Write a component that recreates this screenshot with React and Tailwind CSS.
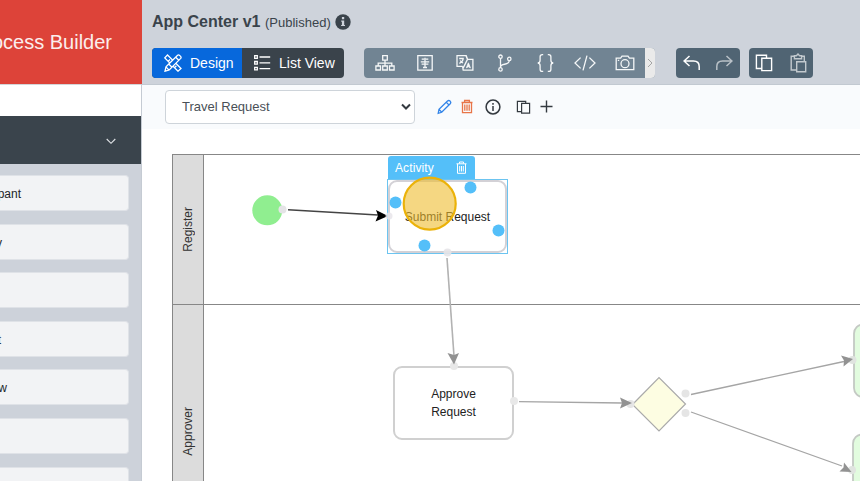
import React from 'react';

const Icon = ({ children, w = 20, h = 20, className = '', sw = 1.3 }) => (
  <svg width={w} height={h} viewBox={`0 0 ${w} ${h}`} className={`block shrink-0 ${className}`} fill="none" stroke="currentColor" strokeWidth={sw}>
    {children}
  </svg>
);

const DesignIcon = () => (
  <Icon w={18} h={18}>
    <path d="M3.5 1 L17 14.5 L14 17.2 L0.8 3.9 Z" />
    <path d="M4.2 7.3l1.8-1.8M7 10.1l1-1M10.6 13.6l1.8-1.8" />
    <path className="fill-[#0768dc]" d="M1 17.2l1-4.3L13.6 1.3q1-.8 2 .1l1 1q.9 1 .1 2L5.2 16z" />
    <path d="M11.7 3.2l3.1 3.1M2 13l3.1 3.1M5 10.2l3 3" />
  </Icon>
);

const ListIcon = () => (
  <Icon w={18} h={18}>
    <path d="M1.7 1.7h2.6v2.6H1.7zM1.7 7.5h2.6v2.6H1.7zM1.7 13.3h2.6v2.6H1.7zM6.5 3h10.7M6.5 8.8h10.7M6.5 14.6h10.7" />
  </Icon>
);

const SitemapIcon = () => (
  <Icon>
    <path d="M7.7 2.6h4.6v4.6H7.7zM.9 13h4.6v4H.9zM7.7 13h4.6v4H7.7zM14.5 13h4.6v4h-4.6zM10 7.2V13M3.2 13v-2.9h13.6V13" />
  </Icon>
);
const FormIcon = () => (
  <Icon>
    <path d="M2.8 2.7h14.4v14.4H2.8zM10 4.7v9.6M6.7 6.2h2.5M10.8 6.2h2.5M5.8 8.8h8.4M6.6 11.2h6.8M8 14.5h4" />
  </Icon>
);
const LanguageIcon = () => (
  <Icon>
    <path d="M7.6 13.4H2V2.6h9.2l1.3 3.3M12.3 6.3h5.6v10.9H8.2l-.6-3.8M10.9 2.6l1.6 3.8-5 10" />
    <path d="M4.2 5.5h4.6M8.2 5.5c-.2 2.300-1.700 3.900-3.900 4.800M5.200 7.500c.6 1.300 1.600 2.100 2.900 2.500" />
    <path fill="currentColor" strokeWidth=".8" d="M11.400 14.800l2-5 2 5-2-1z" />
  </Icon>
);
const BranchIcon = () => (
  <Icon>
    <circle cx="5.500" cy="3.700" r="1.700" />
    <circle cx="5.500" cy="16.400" r="1.700" />
    <circle cx="14.300" cy="5.900" r="1.700" />
    <path d="M5.500 5.400v9.300M14.300 7.600c0 5.300-8.500 2.100-8.800 6.400" />
  </Icon>
);
const BracesIcon = () => (
  <Icon>
    <path d="M8.200 1.600H7.300q-2.200 0-2.200 2.200v3.400q0 2.800-2.400 2.800 2.400 0 2.400 2.800v3.400q0 2.200 2.200 2.200h.9M12.800 1.600h.9q2.200 0 2.200 2.200v3.400q0 2.800 2.400 2.800-2.400 0-2.400 2.800v3.400q0 2.200-2.200 2.200h-.9" />
  </Icon>
);
const CodeIcon = () => (
  <Icon w={22}>
    <path d="M6.600 4.600L1 10l5.600 5.400M15.400 4.600L21 10l-5.600 5.400M13 2.600L9 17.400" />
  </Icon>
);
const CameraIcon = () => (
  <Icon>
    <path d="M1.200 5.200h4.400L7 3.200h6l1.400 2h4.400v11.500H1.200z" />
    <circle cx="10" cy="10.700" r="4" />
    <path d="M2.800 7.300h1.400" />
  </Icon>
);

const CopyIcon = ({ className }) => (
  <Icon w={18} h={18} sw={1.4} className={className}>
    <path d="M6.600 14.500H1.400V1.200h10.100v2.400M6.800 4.200h9.800v12.400H6.800z" />
  </Icon>
);

const tools = [SitemapIcon, FormIcon, LanguageIcon, BranchIcon, BracesIcon, CodeIcon, CameraIcon];

const shapes = [
  { label: 'pant', width: 'w-[21px]' },
  { label: 'y', width: 'w-[2px]' },
  { label: '', width: 'w-0' },
  { label: 't', width: 'w-px' },
  { label: 'w', width: 'w-[7px]' },
  { label: '', width: 'w-0' },
  { label: '', width: 'w-0' },
];

function Sidebar() {
  return (
    <aside className="flex h-full w-[142px] shrink-0 flex-col overflow-hidden bg-[#cdd2da]">
      <div className="flex h-[84px] shrink-0 items-center justify-end bg-[#dd4339] pr-[30px] text-[20px] whitespace-nowrap text-[#fbeeed]">
        ocess Builder
      </div>
      <div className="flex flex-1 flex-col border-r border-[#c5cbd3]">
        <div className="h-8 shrink-0 border-t border-[#d3d5d8] bg-white" />
        <div className="flex h-12 shrink-0 items-center justify-end bg-[#3a444c] pr-[25px] text-[#dfe2e5]">
          <Icon w={10} h={8} sw={1.1} className="translate-y-px"><path d="M.7 2l4.300 4.300L9.300 2" /></Icon>
        </div>
        <div className="flex flex-col gap-[12.6px] pt-[11px] pr-3">
          {shapes.map((s, i) => (
            <div key={i} className="flex h-9 shrink-0 items-center rounded-r-[4px] border border-l-0 border-[#dfe2e7] bg-[#f2f3f5]">
              <div className={`flex justify-end pt-[2px] text-[12px] text-[#212529] ${s.width}`}>{s.label}</div>
            </div>
          ))}
        </div>
      </div>
    </aside>
  );
}

function Header() {
  return (
    <header className="h-[85px] shrink-0 border-b border-[#c2c9d1] bg-[#ced3db] pl-[10px]">
      <div className="flex h-[43px] items-center gap-[5px] text-[#3a434b]">
        <span className="w-[108px] text-[16px] font-bold whitespace-nowrap">App Center v1</span>
        <span className="w-[65px] pt-[2px] text-[13px] whitespace-nowrap">(Published)</span>
        <svg width="16" height="16" viewBox="0 0 16 16" className="block">
          <circle cx="8" cy="8" r="7.700" fill="currentColor" />
          <path d="M6.900 3h2.300v2.200H6.900zM6.200 6.600h3v4.300h.8V12H6.100v-1.100h.8V7.700h-.7z" fill="#ced3db" />
        </svg>
      </div>
      <div className="flex h-[30px] translate-y-[5px] items-stretch text-white">
        <div className="flex overflow-hidden rounded bg-[#3a434b] text-[14px]">
          <div className="flex w-[90px] items-center gap-2 bg-[#0768dc] pl-3"><DesignIcon />Design</div>
          <div className="flex w-[102px] items-center gap-2 pl-[11px] whitespace-nowrap"><ListIcon />List View</div>
        </div>
        <div className="ml-[20px] flex overflow-hidden rounded bg-[#718493] pl-px">
          {tools.map((T, i) => (
            <div key={i} className="flex w-10 items-center justify-center text-[#f5f7f8]"><T /></div>
          ))}
          <div className="flex w-[10px] items-center justify-center bg-[#eaeaea] text-[#a5a5a5]">
            <Icon w={6} h={10} sw={1}><path d="M1 1l4 4-4 4" /></Icon>
          </div>
        </div>
        <div className="ml-[21px] flex w-16 items-center justify-between rounded bg-[#506473] px-[7px]">
          <Icon w={17} h={18} sw={1.5}><path d="M6.500 2L1 7l5.500 5M1 7h9.500q5.700 0 5.700 5.500V16" /></Icon>
          <Icon w={17} h={18} sw={1.5} className="opacity-60"><path d="M10.500 2L16 7l-5.500 5M16 7H6.500Q.8 7 .8 12.500V16" /></Icon>
        </div>
        <div className="ml-[9px] flex w-16 items-center justify-between rounded bg-[#506473] px-[6px]">
          <CopyIcon />
          <Icon w={18} h={20} sw={1.4} className="opacity-65">
            <path d="M7 17H2.200V3.200h3.200M12.600 3.200h2.700v5M5.400 2.700h2L9 1l1.600 1.700h2v3.100H5.400zM7.700 8.700h9v10.100h-9z" />
          </Icon>
        </div>
      </div>
    </header>
  );
}

function SubBar() {
  return (
    <div className="flex h-[44px] shrink-0 items-center bg-[#f9fbfd] pl-[23px] text-[#343a40]">
      <div className="flex h-[34px] w-[250px] items-center justify-between rounded border border-[#ced4da] bg-white pr-[3px] pl-[16px] text-[13px] text-[#495057]">
        Travel Request
        <Icon w={10} h={8} sw={2} className="text-[#343a40]"><path d="M1 1.500l4 4 4-4" /></Icon>
      </div>
      <Icon w={15} h={16} className="ml-[22px] text-[#3284e8]">
        <path d="M1.200 14.400l.8-4L10.500 2q1.300-1.100 2.600.1 1.300 1.300.1 2.600l-8.500 8.600zM9.300 3.300l2.800 2.800M2 10.400l2.800 2.800" />
      </Icon>
      <Icon w={12} h={16} className="ml-[9px] text-[#e87548]" sw={1.3}>
        <path d="M.5 3.500h11M3.600 3.300V1.500h4.800v1.800M1.500 3.700v10h9v-10M3.800 5.500v6.300M6 5.500v6.300M8.200 5.500v6.300" />
      </Icon>
      <Icon w={16} h={16} className="ml-[12px]" sw={1.5}>
        <circle cx="8" cy="8" r="6.900" />
        <path d="M8 4v1.700M8 7v5" />
      </Icon>
      <Icon w={15} h={15} className="ml-[15px]" sw={1.2}>
        <path d="M5.400 11.700H1.400V1.300h8.300v2M5.600 3.400h8v9.800h-8z" />
      </Icon>
      <Icon w={13} h={13} className="ml-[9px] -translate-y-px" sw={1.4}><path d="M6.500.5v12M.5 6.500h12" /></Icon>
    </div>
  );
}

function Lane({ name, className, labelClass }) {
  return (
    <div className={`flex border-t border-l border-[#878787] ${className}`}>
      <div className="flex w-[31px] shrink-0 items-center justify-center border-r border-[#878787] bg-[#dcdcdc]">
        <span className={`rotate-180 text-[12px] text-[#333] [writing-mode:vertical-rl] ${labelClass}`}>{name}</span>
      </div>
    </div>
  );
}

function Connectors() {
  return (
    <svg className="absolute inset-0" width="718" height="352" viewBox="142 129 718 352">
      <circle cx="267.300" cy="210.300" r="15" fill="#90ee90" />
      <circle cx="282.500" cy="209.500" r="4" fill="#e4e4e6" />
      <path d="M288 209.700L378 215" stroke="#444" strokeWidth="1.500" />
      <path d="M376 210l12 6-12.500 5.500 2.500-6z" fill="#000" />
      <g stroke="#a5a5a5" strokeWidth="1.300">
        <path d="M447 258l7 98" stroke="#b2b2b2" strokeWidth="1.600" />
        <path d="M519 401.600l103 1.400M691 394.500l153-33M691 412l151 54" />
      </g>
      <path d="M632.500 404.500L659 377.500l26.500 26.500L659 431z" fill="#fdfde2" stroke="#aaa" strokeWidth="1.200" />
      <g fill="#e5e5e5">
        <circle cx="685.500" cy="393.500" r="4" />
        <circle cx="685.500" cy="413" r="4" />
        <circle cx="630.500" cy="404" r="4" />
      </g>
      <rect x="854" y="324.500" width="50" height="72.500" rx="9" fill="#e2fcdf" stroke="#c4c9c4" strokeWidth="1.800" />
      <rect x="853" y="434.500" width="50" height="72.500" rx="9" fill="#e2fcdf" stroke="#c4c9c4" strokeWidth="1.800" />
      <circle cx="852.500" cy="360" r="4" fill="#e0e4e0" />
      <circle cx="852" cy="470" r="4" fill="#e0e4e0" />
      <g fill="#929292">
        <path d="M620 397.500l12 5.500-12 5.500 2-5.500z" />
        <path d="M841 355.500l12 3.500-9.500 7.500.5-6z" />
        <path d="M844 462.500l7.500 9.500-12-.5 4-4z" />
      </g>
    </svg>
  );
}

function Canvas() {
  return (
    <div className="relative flex-1 overflow-hidden bg-white pt-[25px] pl-[30px]">
      <Lane name="Register" className="h-[149.500px]" labelClass="" />
      <Lane name="Approver" className="h-[300px]" labelClass="-translate-y-[23px]" />
      <Connectors />

      <div className="absolute top-[237px] left-[251px] flex h-[74px] w-[121px] items-center justify-center rounded-[9px] border-2 border-[#d0d0d0] bg-white text-center text-[12px] leading-[18px] text-[#222]">
        Approve<br />Request
      </div>
      <div className="absolute top-[268px] left-[368px] size-2 rounded-full bg-[#e8e8e8]" />
      <div className="absolute top-[233px] left-[308px] size-2 rounded-full bg-[#e8e8e8]" />
      <svg className="absolute top-[223px] left-[305px]" width="13" height="13"><path d="M.5 1l6.500 2 5-2L7 12.500z" fill="#929292" /></svg>

      <div className="absolute top-[27px] left-[246px] flex h-6 w-[87px] items-center justify-between rounded-t-[3px] bg-[#54bff9] pr-[8px] pl-[7px] text-[12px] tracking-[0.1px] text-white">
        Activity
        <Icon w={11} h={13} sw={1} className="-translate-y-px"><path d="M.5 2.800h10M3.500 2.500V1h4v1.500M1.500 3v9.300h8V3M3.700 5v5.500M5.500 5v5.500M7.300 5v5.500" /></Icon>
      </div>
      <div className="absolute top-[50px] left-[245px] h-[75px] w-[121px] border border-[#6cc4f0] bg-white">
        <div className="flex h-full items-center justify-center rounded-[9px] border-2 border-[#d3d1d6] text-[12px] text-[#222]">Submit Request</div>
      </div>
      <svg className="absolute inset-0" width="718" height="352" viewBox="142 129 718 352">
        <circle cx="389" cy="216" r="3.500" fill="#e6e4e8" opacity=".8" />
        <circle cx="447.500" cy="252.500" r="4" fill="#e6e4e8" opacity=".9" />
        <g fill="#54bff9">
          <circle cx="395.500" cy="202.500" r="6" />
          <circle cx="470.500" cy="187.500" r="6" />
          <circle cx="498.500" cy="230.500" r="6" />
          <circle cx="424.500" cy="245.500" r="6" />
        </g>
        <circle cx="429.700" cy="203.700" r="26" fill="#eebc2f" fillOpacity=".6" stroke="#ebb209" strokeWidth="2.200" />
      </svg>
    </div>
  );
}

export default function App() {
  return (
    <div className="flex h-[481px] w-[860px] overflow-hidden bg-white font-['Liberation_Sans',Arial,sans-serif]">
      <Sidebar />
      <main className="flex min-w-0 flex-1 flex-col">
        <Header />
        <SubBar />
        <Canvas />
      </main>
    </div>
  );
}
